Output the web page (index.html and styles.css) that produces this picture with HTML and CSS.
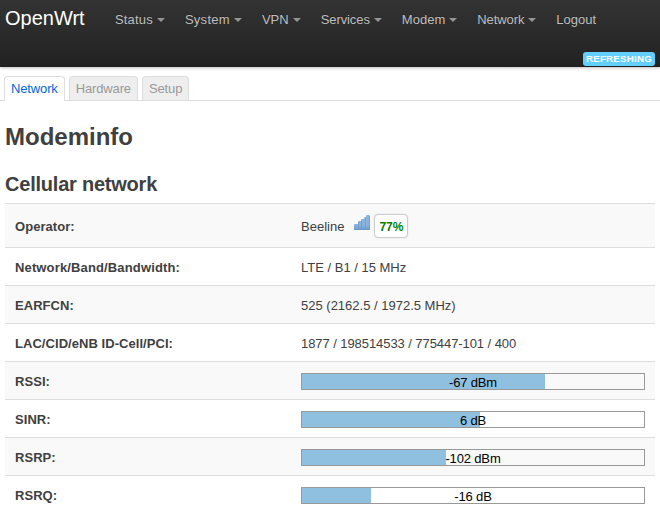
FILE: index.html
```html
<!DOCTYPE html>
<html lang="en">
<head>
<meta charset="utf-8">
<title>OpenWrt - Modeminfo</title>
<link rel="stylesheet" href="styles.css">
</head>
<body>
<header>
  <a class="brand">OpenWrt</a>
  <nav>
    <a class="menu status">Status</a>
    <a class="menu system">System</a>
    <a class="menu">VPN</a>
    <a class="menu services">Services</a>
    <a class="menu">Modem</a>
    <a class="menu network">Network</a>
    <a>Logout</a>
  </nav>
  <span class="label">REFRESHING</span>
</header>
<ul class="tabs">
  <li class="active">Network</li>
  <li>Hardware</li>
  <li>Setup</li>
</ul>
<main>
  <h2>Modeminfo</h2>
  <h3>Cellular network</h3>
  <div class="table">
    <div class="row operator"><div class="name">Operator:</div><div class="value">Beeline
      <svg class="signal" width="16" height="16" viewBox="0 0 16 16">
        <defs><linearGradient id="g" x1="0" y1="0" x2="0" y2="16" gradientUnits="userSpaceOnUse"><stop offset="0" stop-color="#8fb5da"/><stop offset=".6" stop-color="#8ab3de"/><stop offset="1" stop-color="#6f9dca"/></linearGradient></defs>
        <path fill="url(#g)" d="M0 10q0-1 1-1h3V7q0-1 1-1h2V5q0-1 1-1h2V3q0-1 1-1h1V1q0-1 1-1h2q1 0 1 1v14H0z"/>
        <path fill="none" stroke="#5f8cbd" stroke-opacity=".45" d="M4.500 7v7M7.500 5v9M11.500 3v11M15.500 1v13M0 14.500h16"/>
      </svg><span class="badge">77%</span></div></div>
    <div class="row"><div class="name wide">Network/Band/Bandwidth:</div><div class="value">LTE / B1 / 15 MHz</div></div>
    <div class="row"><div class="name">EARFCN:</div><div class="value">525 (2162.5 / 1972.5 MHz)</div></div>
    <div class="row"><div class="name">LAC/CID/eNB ID-Cell/PCI:</div><div class="value cells">1877 / 198514533 / 775447-101 / 400</div></div>
    <div class="row"><div class="name">RSSI:</div><div class="value"><div class="bar"><div class="fill" style="width:71%"></div><span>-67 dBm</span></div></div></div>
    <div class="row"><div class="name">SINR:</div><div class="value"><div class="bar"><div class="fill" style="width:52.100%"></div><span>6 dB</span></div></div></div>
    <div class="row"><div class="name">RSRP:</div><div class="value"><div class="bar"><div class="fill" style="width:42.200%"></div><span>-102 dBm</span></div></div></div>
    <div class="row"><div class="name">RSRQ:</div><div class="value"><div class="bar"><div class="fill" style="width:20.200%"></div><span>-16 dB</span></div></div></div>
  </div>
</main>
</body>
</html>
```
FILE: styles.css
```css
* { box-sizing: border-box; }
body {
  margin: 0;
  background: #fff;
  color: #404040;
  font: 13px/18px "Liberation Sans", Arial, sans-serif;
  overflow: hidden;
}
header {
  display: flex;
  position: relative;
  height: 67px;
  padding-left: 5px;
  background: linear-gradient(#333, #222);
  box-shadow: 0 1px 3px rgba(0, 0, 0, .25), inset 0 -1px 0 rgba(0, 0, 0, .1);
}
.brand {
  width: 100px;
  padding-top: 8px;
  color: #fff;
  font-size: 20px;
  line-height: 20px;
}
nav { display: flex; }
nav a {
  padding: 10px 10px 11px;
  color: #bfbfbf;
  line-height: 19px;
  text-shadow: 0 -1px 0 rgba(0, 0, 0, .25);
}
.status { letter-spacing: .17px; }
.system { letter-spacing: .28px; }
.services, .network { letter-spacing: -.08px; }
.menu::after {
  content: "";
  display: inline-block;
  margin-left: 4px;
  border: 4px solid transparent;
  border-top-color: #959595;
  border-bottom: 0;
  vertical-align: 2px;
}
.label {
  position: absolute;
  right: 5px;
  top: 52px;
  width: 72px;
  height: 14px;
  padding: 0 3px;
  border-radius: 3px;
  background: #62cffc;
  color: #fff;
  font-size: 9.750px;
  font-weight: bold;
  line-height: 14px;
  letter-spacing: .2px;
  white-space: nowrap;
}
.tabs {
  display: flex;
  gap: 4px;
  height: 34px;
  margin: 0 0 18px;
  padding: 9px 4px 0;
  border-bottom: 1px solid #ddd;
  list-style: none;
}
.tabs li {
  height: 24px;
  padding: 3px 6px 0;
  border: 1px solid #ddd;
  border-bottom: 0;
  border-radius: 4px 4px 0 0;
  background: #eee;
  color: #999;
  letter-spacing: -.14px;
}
.tabs .active {
  height: 25px;
  background: #fff;
  color: #0069d6;
}
main { padding: 0 5px; }
h2 { margin: 0; font-size: 24px; line-height: 36px; }
h3 { margin: 11px 0 0; font-size: 20px; line-height: 36px; letter-spacing: -.22px; }
.table { margin-top: 1px; }
.row {
  display: flex;
  height: 38px;
  align-items: center;
  border-top: 1px solid #ddd;
  padding: 1px 10px 0;
}
.row:nth-child(odd) { background: #f9f9f9; }
.operator { height: 44px; }
.name { width: 286px; padding-top: 1px; font-weight: bold; letter-spacing: .05px; }
.wide { letter-spacing: .14px; }
.value { flex: 1; padding-top: 1px; }
.cells { letter-spacing: -.07px; }
.operator .value { display: flex; align-items: center; }
.signal { margin: -7px 4px 0 10px; }
.badge {
  height: 24px;
  margin-top: -2px;
  padding: 3px 4px;
  border: 1px solid #ccc;
  border-radius: 4px;
  background: #fff;
  color: #008000;
  font-size: 12px;
  font-weight: bold;
  box-shadow: 0 0 2px rgba(0, 0, 0, .1);
}
.bar {
  position: relative;
  height: 17px;
  border: 1px solid #999;
}
.fill { height: 100%; background: #90c0e0; }
.bar span {
  position: absolute;
  inset: 0;
  color: #000;
  line-height: 18px;
  letter-spacing: -.15px;
  text-align: center;
}
```
